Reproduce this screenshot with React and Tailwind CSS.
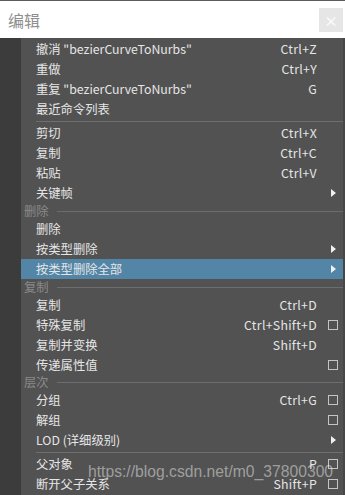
const font = { fontFamily: '"Noto Sans CJK SC", "Microsoft YaHei", sans-serif' }

const groups = [
  { type: 'item', label: '撤消 "bezierCurveToNurbs"', shortcut: 'Ctrl+Z' },
  { type: 'item', label: '重做', shortcut: 'Ctrl+Y' },
  { type: 'item', label: '重复 "bezierCurveToNurbs"', shortcut: 'G' },
  { type: 'item', label: '最近命令列表' },
  { type: 'sep' },
  { type: 'item', label: '剪切', shortcut: 'Ctrl+X' },
  { type: 'item', label: '复制', shortcut: 'Ctrl+C' },
  { type: 'item', label: '粘贴', shortcut: 'Ctrl+V' },
  { type: 'item', label: '关键帧', sub: true },
  { type: 'head', label: '删除', h: 'h-[16px]' },
  { type: 'item', label: '删除' },
  { type: 'item', label: '按类型删除', sub: true },
  { type: 'item', label: '按类型删除全部', sub: true, active: true },
  { type: 'head', label: '复制', h: 'h-[16px]' },
  { type: 'item', label: '复制', shortcut: 'Ctrl+D' },
  { type: 'item', label: '特殊复制', shortcut: 'Ctrl+Shift+D', box: true },
  { type: 'item', label: '复制并变换', shortcut: 'Shift+D' },
  { type: 'item', label: '传递属性值', box: true },
  { type: 'head', label: '层次', h: 'h-[15px]' },
  { type: 'item', label: '分组', shortcut: 'Ctrl+G', box: true },
  { type: 'item', label: '解组', box: true },
  { type: 'item', label: 'LOD (详细级别)', sub: true },
  { type: 'sep' },
  { type: 'item', label: '父对象', shortcut: 'P', box: true },
  { type: 'item', label: '断开父子关系', shortcut: 'Shift+P', box: true },
]

export default function App() {
  return (
    <div className="w-[345px] h-[495px] bg-[#525252] overflow-hidden relative text-[12.3px]" style={font}>
      <div className="h-[1px] bg-[#5c5c5c]" />
      {/* Title bar */}
      <div className="h-[37px] bg-white flex items-center pl-[8px] pr-[2px]">
        <span className="text-[16px] text-[#8e8e8e] flex-1 leading-none">编辑</span>
        <div className="w-[24px] h-[24px] bg-[#e6e6e6] flex items-center justify-center text-white text-[14px] leading-none">×</div>
      </div>
      <div className="flex">
        <div className="w-[21px] bg-[#3c3c3c] shrink-0 h-[460px]" />
        <div className="flex-1 pt-[1px] border-r-2 border-[#474747]">
          {groups.map((g, i) => <Row key={i} {...g} />)}
        </div>
      </div>
      <div className="absolute left-[88px] top-[464px] text-[15.7px] leading-[16px] text-white/45 whitespace-nowrap" style={{ fontFamily: '"Liberation Sans", Arial, sans-serif' }}>
        https://blog.csdn.net/m0_37800300
      </div>
    </div>
  )
}

function Row({ type, label, shortcut, sub, box, active, h }) {
  if (type === 'sep') {
    return (
      <div className="h-[4px] flex items-center pl-[15px]">
        <div className="h-[1px] flex-1 bg-[#6e6e6e]" />
      </div>
    )
  }
  if (type === 'head') {
    return (
      <div className={`${h} flex items-center pl-[3px] gap-[8px]`}>
        <span className="text-[#8a8a8a] leading-none">{label}</span>
        <div className="h-[1px] flex-1 bg-[#6c6c6c]" />
      </div>
    )
  }
  return (
    <div className={`h-[20px] flex items-center pl-[15px] text-[#e6e6e6] ${active ? 'bg-[#5285a6]' : ''}`}>
      <span className="flex-1 whitespace-nowrap leading-none">{label}</span>
      <span className="leading-none whitespace-nowrap tracking-[0.3px]">{shortcut}</span>
      <div className="w-[26px] h-full flex items-center">
        {box && <div className="ml-[11px] w-[10px] h-[10px] border border-[#c4c4c4]" />}
        {sub && (
          <svg className="ml-[14px]" width="5" height="8" viewBox="0 0 5 8">
            <path d="M0 0 L5 4 L0 8 Z" fill="#f0f0f0" />
          </svg>
        )}
      </div>
    </div>
  )
}
